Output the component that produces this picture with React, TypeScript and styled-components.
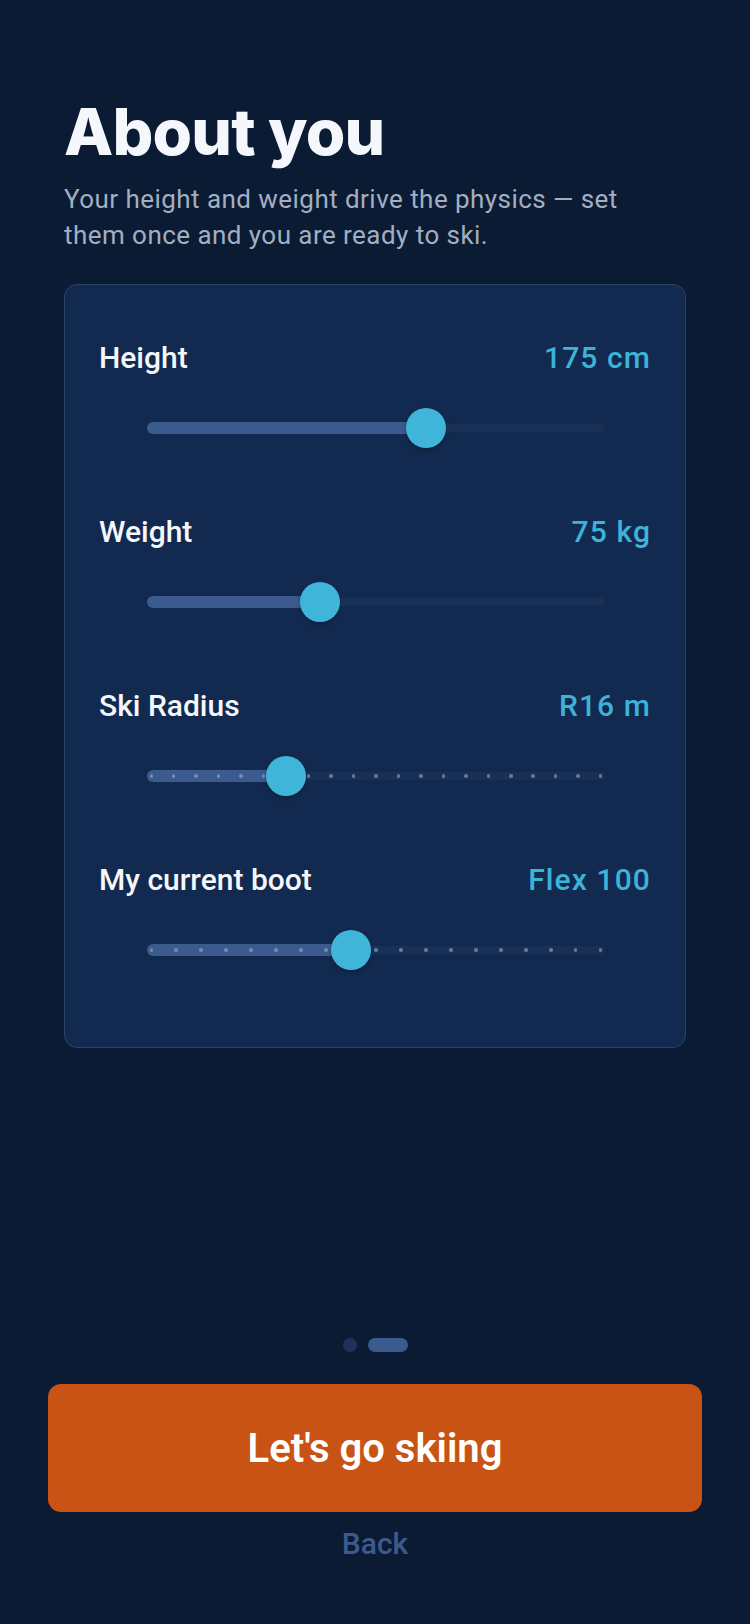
import React from 'react'
import styled, { createGlobalStyle } from 'styled-components'

const GlobalStyle = createGlobalStyle`
  html, body {
    margin: 0;
    padding: 0;
    background: #0c1b34;
  }
  #root {
    min-height: 100vh;
  }
  * {
    box-sizing: border-box;
  }
`

interface SliderSpec {
  label: string
  value: string
  min: number
  max: number
  current: number
  steps?: number
}

const sliders: SliderSpec[] = [
  { label: 'Height', value: '175 cm', min: 120, max: 210, current: 175 },
  { label: 'Weight', value: '75 kg', min: 30, max: 150, current: 75 },
  { label: 'Ski Radius', value: 'R16 m', min: 10, max: 30, current: 16, steps: 21 },
  { label: 'My current boot', value: 'Flex 100', min: 60, max: 150, current: 100, steps: 19 },
]

const Page = styled.div`
  min-height: 100vh;
  display: flex;
  flex-direction: column;
  font-family: Roboto, 'Liberation Sans', sans-serif;
  color: #f3f6fa;
`

const Main = styled.main`
  padding: 97px 64px 0 64px;
`

const Title = styled.h1`
  margin: 0;
  font-family: Inter, Roboto, 'Liberation Sans', sans-serif;
  font-size: 64px;
  line-height: 70px;
  font-weight: 800;
  letter-spacing: -0.8px;
  color: #f4f7fb;
`

const Subtitle = styled.p`
  margin: 14px 0 0 0;
  max-width: 580px;
  font-size: 26px;
  line-height: 36px;
  font-weight: 400;
  letter-spacing: 0.45px;
  color: #a2afc1;
`

const Card = styled.section`
  margin-top: 31px;
  background: #122a4f;
  border: 1.5px solid #2c4368;
  border-radius: 13px;
  padding: 55px 34px 77px 34px;
  display: flex;
  flex-direction: column;
  gap: 66px;
`

const Field = styled.div`
  display: flex;
  flex-direction: column;
  gap: 32px;
`

const FieldHeader = styled.div`
  display: flex;
  justify-content: space-between;
  align-items: baseline;
  font-size: 30px;
  line-height: 36px;
  font-weight: 500;
`

const Label = styled.span`
  color: #f5f7fa;
`

const Value = styled.span`
  color: #3db3d8;
  letter-spacing: 1.1px;
`

const SliderArea = styled.div`
  height: 40px;
  margin: 0 46px 0 48px;
  display: flex;
  align-items: center;
`

const Track = styled.div`
  position: relative;
  flex: 1;
  height: 8px;
  border-radius: 4px;
  background: #1a3157;
`

const Fill = styled.div`
  position: absolute;
  left: 0;
  top: 50%;
  height: 12px;
  transform: translateY(-50%);
  border-radius: 6px;
  background: #3b5a8e;
`

const Ticks = styled.div`
  position: absolute;
  inset: 0 2.5px;
  display: flex;
  justify-content: space-between;
  align-items: center;
`

const Tick = styled.span`
  width: 3.5px;
  height: 3.5px;
  border-radius: 50%;
  background: rgba(150, 170, 205, 0.6);
`

const Thumb = styled.div`
  position: absolute;
  top: 50%;
  width: 40px;
  height: 40px;
  border-radius: 50%;
  background: #3fb5d9;
  transform: translate(-50%, -50%);
  box-shadow: 0 2px 4px rgba(0, 0, 0, 0.25);
`

const Footer = styled.footer`
  margin-top: auto;
  padding: 0 48px 62px 48px;
  display: flex;
  flex-direction: column;
  align-items: center;
`

const Pager = styled.div`
  display: flex;
  gap: 11px;
  margin-bottom: 32px;
`

const PagerDot = styled.span<{ $active?: boolean }>`
  width: ${({ $active }) => ($active ? '40px' : '14px')};
  height: 14px;
  border-radius: 7px;
  background: ${({ $active }) => ($active ? '#3b5a8e' : '#1c3258')};
`

const PrimaryButton = styled.button`
  width: 100%;
  height: 128px;
  border: none;
  border-radius: 13px;
  background: #c85314;
  color: #ffffff;
  font-family: Roboto, 'Liberation Sans', sans-serif;
  font-size: 40px;
  font-weight: 600;
  cursor: pointer;
`

const BackLink = styled.button`
  margin-top: 14px;
  border: none;
  background: none;
  padding: 0;
  font-family: Roboto, 'Liberation Sans', sans-serif;
  font-size: 30px;
  line-height: 36px;
  font-weight: 500;
  color: #3b5a8e;
  cursor: pointer;
`

const Slider: React.FC<{ spec: SliderSpec }> = ({ spec }) => {
  const frac = (spec.current - spec.min) / (spec.max - spec.min)
  const pos = `calc(4px + ${frac} * (100% - 8px))`

  return (
    <SliderArea>
      <Track>
        <Fill style={{ width: pos }} />
        {spec.steps && (
          <Ticks>
            {Array.from({ length: spec.steps }).map((_, i) => (
              <Tick key={i} />
            ))}
          </Ticks>
        )}
        <Thumb style={{ left: pos }} />
      </Track>
    </SliderArea>
  )
}

export default function App() {
  return (
    <Page>
      <GlobalStyle />
      <Main>
        <Title>About you</Title>
        <Subtitle>
          Your height and weight drive the physics — set them once and you are ready to ski.
        </Subtitle>
        <Card>
          {sliders.map((s) => (
            <Field key={s.label}>
              <FieldHeader>
                <Label>{s.label}</Label>
                <Value>{s.value}</Value>
              </FieldHeader>
              <Slider spec={s} />
            </Field>
          ))}
        </Card>
      </Main>
      <Footer>
        <Pager>
          <PagerDot />
          <PagerDot $active />
        </Pager>
        <PrimaryButton>Let's go skiing</PrimaryButton>
        <BackLink>Back</BackLink>
      </Footer>
    </Page>
  )
}
